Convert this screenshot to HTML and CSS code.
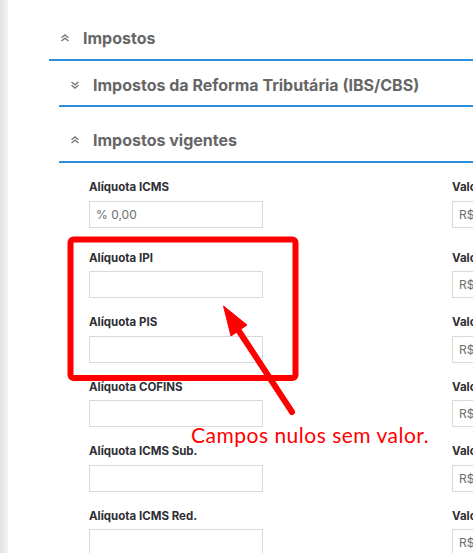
FILE: index.html
```html
<!DOCTYPE html>
<html lang="pt-BR">
<head>
    <meta charset="UTF-8">
    <meta name="viewport" content="width=device-width, initial-scale=1.0">
    <title>Impostos</title>
    <link rel="stylesheet" href="styles.css">
</head>
<body>
    <div class="sidebar-edge"></div>
    <div class="main">
        <div class="panel">
            <div class="panel-header">
                <svg class="chevron" viewBox="0 0 10 8"><polyline points="1.5,3.8 5,1 8.5,3.8"/><polyline points="1.5,7 5,4.2 8.5,7"/></svg>
                <span>Impostos</span>
            </div>
            <div class="panel-body">
                <div class="subpanel">
                    <div class="subpanel-header">
                        <svg class="chevron" viewBox="0 0 10 8"><polyline points="1.5,1 5,3.8 8.5,1"/><polyline points="1.5,4.2 5,7 8.5,4.2"/></svg>
                        <span>Impostos da Reforma Tributária (IBS/CBS)</span>
                    </div>
                </div>
                <div class="subpanel subpanel-open">
                    <div class="subpanel-header">
                        <svg class="chevron" viewBox="0 0 10 8"><polyline points="1.5,3.8 5,1 8.5,3.8"/><polyline points="1.5,7 5,4.2 8.5,7"/></svg>
                        <span>Impostos vigentes</span>
                    </div>
                    <div class="fields">
                        <div class="field field-first">
                            <label>Alíquota ICMS</label>
                            <input type="text" placeholder="% 0,00">
                        </div>
                        <div class="field field-first">
                            <label>Valor ICMS</label>
                            <input type="text" placeholder="R$ 0,00">
                        </div>
                        <div class="field">
                            <label>Alíquota IPI</label>
                            <input type="text">
                        </div>
                        <div class="field">
                            <label>Valor IPI</label>
                            <input type="text" placeholder="R$ 0,00">
                        </div>
                        <div class="field">
                            <label>Alíquota PIS</label>
                            <input type="text">
                        </div>
                        <div class="field">
                            <label>Valor PIS</label>
                            <input type="text" placeholder="R$ 0,00">
                        </div>
                        <div class="field">
                            <label>Alíquota COFINS</label>
                            <input type="text">
                        </div>
                        <div class="field">
                            <label>Valor COFINS</label>
                            <input type="text" placeholder="R$ 0,00">
                        </div>
                        <div class="field">
                            <label>Alíquota ICMS Sub.</label>
                            <input type="text">
                        </div>
                        <div class="field">
                            <label>Valor ICMS Sub.</label>
                            <input type="text" placeholder="R$ 0,00">
                        </div>
                        <div class="field">
                            <label>Alíquota ICMS Red.</label>
                            <input type="text">
                        </div>
                        <div class="field">
                            <label>Valor ICMS Red.</label>
                            <input type="text" placeholder="R$ 0,00">
                        </div>
                    </div>
                </div>
            </div>
        </div>
    </div>

    <!-- anotação por cima da tela -->
    <svg class="annotation" width="473" height="553" viewBox="0 0 473 553">
        <rect x="70.5" y="239.5" width="225" height="138.5" rx="3" class="mark"/>
        <line x1="292" y1="412" x2="233" y2="322" class="mark"/>
        <polygon points="223.5,306 231,336 247,325" class="mark-fill"/>
    </svg>
    <div class="note">Campos nulos sem valor.</div>
</body>
</html>
```

FILE: styles.css
```css
:root {
    --line-color: #2b8fdc;
    --title-color: #666;
    --label-color: #2e2e33;
    --border-color: #d9d9d9;
    --red: #ff0000;
}

body {
    margin: 0;
    display: flex;
    height: 100vh;
    overflow: hidden;
    background-color: #fff;
    font-family: Inter, 'Noto Sans', sans-serif;
}

.sidebar-edge {
    flex: 0 0 8px;
    background: linear-gradient(to right, #e2e2e2, #f2f2f2);
}

.main {
    flex: 1;
    min-width: 0;
    padding: 18px 0 0 41px;
    overflow: hidden;
}

.panel-header,
.subpanel-header {
    display: flex;
    align-items: center;
    color: var(--title-color);
    font-weight: 700;
    font-size: 16px;
    line-height: 20px;
    white-space: nowrap;
    border-bottom: 2px solid var(--line-color);
}

.panel-header {
    padding: 10px 0 11px 11px;
}

.panel-body {
    padding-left: 10px;
}

.subpanel-header {
    padding: 14px 0 10px 11px;
}

.subpanel-open {
    margin-top: 10px;
}

.subpanel-open .subpanel-header {
    padding: 13px 0 11px 11px;
}

.chevron {
    width: 10px;
    height: 8px;
    margin-right: 13px;
    fill: none;
    stroke: #777;
    stroke-width: 1.4;
}

.fields {
    display: grid;
    grid-template-columns: 174px 174px;
    column-gap: 189px;
    row-gap: 17px;
    padding: 17px 0 0 30px;
}

.field {
    display: flex;
    flex-direction: column;
}

.field-first {
    margin-bottom: 6px;
}

label {
    font-size: 11.5px;
    line-height: 14px;
    font-weight: 700;
    color: var(--label-color);
    white-space: nowrap;
    margin-bottom: 6.5px;
}

input[type="text"] {
    height: 27px;
    width: 100%;
    box-sizing: border-box;
    border: 1px solid var(--border-color);
    border-radius: 0;
    padding: 0 6px;
    font-family: inherit;
    font-size: 12px;
    color: #555;
    background-color: #fff;
}

input[type="text"]::placeholder {
    color: #6e6e6e;
}

.annotation {
    position: absolute;
    left: 0;
    top: 0;
    pointer-events: none;
}

.mark {
    fill: none;
    stroke: var(--red);
    stroke-width: 6;
    stroke-linecap: round;
}

.mark-fill {
    fill: var(--red);
    stroke: var(--red);
    stroke-width: 1;
    stroke-linejoin: round;
}

.note {
    position: absolute;
    left: 191px;
    top: 423px;
    color: var(--red);
    font-family: Lato, 'Open Sans', sans-serif;
    font-size: 21px;
    line-height: 24px;
    letter-spacing: 0.5px;
    white-space: nowrap;
    pointer-events: none;
}
```
